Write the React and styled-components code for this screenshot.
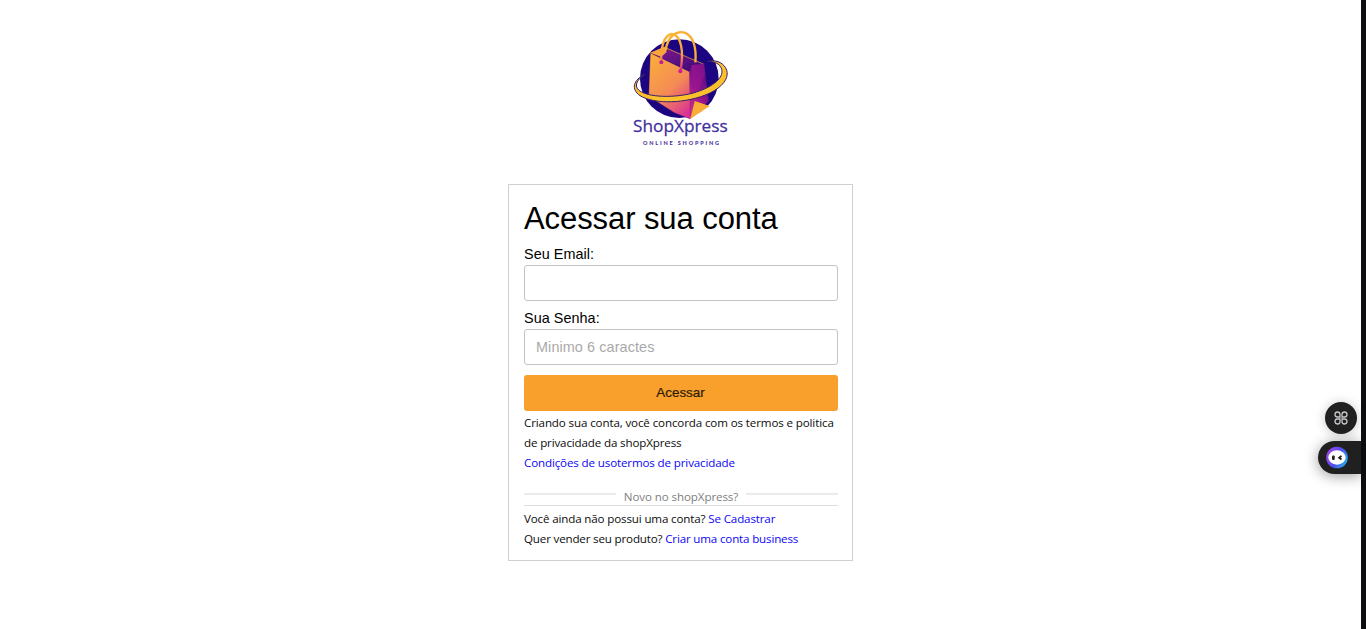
import React from 'react';
import styled, { createGlobalStyle } from 'styled-components';

const GlobalStyle = createGlobalStyle`
  * { box-sizing: border-box; }
  body { margin: 0; background: #fff; overflow: hidden; font-family: "Liberation Sans", Arial, sans-serif; color: #000; }
  h1, p { margin: 0; }
`;

const Page = styled.div`
  display: flex;
  height: 629px;
`;

const Main = styled.main`
  flex: 1;
  display: flex;
  flex-direction: column;
  align-items: center;
  padding-top: 20px;
`;

const EdgeStrip = styled.div`
  width: 5px;
  background: #0c0e0f;
`;

const LogoArt = styled.svg`
  display: block;
  width: 120px;
  height: 135px;
  flex: none;
`;

const Card = styled.section`
  width: 345px;
  height: 377px;
  margin-top: 29px;
  padding: 14px 14px 0 15px;
  border: 1px solid #d0d0d0;
`;

const Title = styled.h1`
  font-size: 31px;
  line-height: 40px;
  font-weight: 400;
  letter-spacing: -0.08px;
  white-space: nowrap;
`;

const Field = styled.label`
  display: block;
  margin-top: ${(p) => p.$gap}px;
  font-size: 14.4px;
  line-height: 18px;
  letter-spacing: 0.05px;
`;

const Input = styled.input`
  display: block;
  width: 314px;
  height: 36px;
  margin-top: 2px;
  padding: 0 11px;
  border: 1px solid #c3c3c3;
  border-radius: 3px;
  background: #fff;
  font: 14.4px "Liberation Sans", Arial, sans-serif;
  letter-spacing: 0.1px;
  outline: none;
  &::placeholder { color: #a9a9a9; opacity: 1; }
`;

const Submit = styled.button`
  display: block;
  width: 314px;
  height: 36px;
  margin-top: 10px;
  padding: 0 1px 2px 0;
  border: 0;
  border-radius: 3px;
  background: #f8a02b;
  color: #2b1c08;
  font: 13.4px "Liberation Sans", Arial, sans-serif;
  -webkit-text-stroke: 0.2px #2b1c08;
`;

const Terms = styled.div`
  padding-top: 2px;
`;

const Small = styled.p`
  height: 20px;
  font-family: "Open Sans", "Segoe UI", sans-serif;
  font-size: 11.6px;
  line-height: 19px;
  color: #0c0c0c;
  white-space: nowrap;
  letter-spacing: ${(p) => p.$track || 0}px;
`;

const Link = styled.a`
  color: #0c06f5;
`;

const Divider = styled.div`
  display: flex;
  align-items: center;
  height: 21px;
  margin-top: 12px;
  padding-top: 2px;
  border-bottom: 1px solid #dedede;
  margin-bottom: 3px;
`;

const Rule = styled.span`
  flex: 1;
  height: 2px;
  margin-top: -4px;
  background: #ebebeb;
`;

const DividerText = styled(Small)`
  padding: 2px 8px 0;
  height: 22px;
  color: #808080;
`;

const Widgets = styled.aside`
  position: fixed;
  right: 5px;
  top: 402px;
  display: flex;
  flex-direction: column;
  align-items: flex-end;
  gap: 7px;
`;

const RoundButton = styled.div`
  width: 32px;
  height: 32px;
  margin-right: 4px;
  border-radius: 50%;
  background: #202021;
  display: grid;
  place-items: center;
  box-shadow: 0 1px 12px rgba(0, 0, 0, 0.22);
`;

const TabButton = styled.div`
  width: 43px;
  height: 33px;
  padding-left: 7px;
  border-radius: 17px 0 0 17px;
  background: #202021;
  display: flex;
  align-items: center;
  box-shadow: 0 2px 14px rgba(0, 0, 0, 0.4);
`;

function Logo() {
  return (
    <LogoArt viewBox="3 0 360 405" role="img" aria-label="ShopXpress">
      <defs>
        <linearGradient id="front" x1="0.2" y1="0" x2="0.8" y2="1">
          <stop offset="0" stopColor="#f9ac3c" />
          <stop offset="0.55" stopColor="#f58a55" />
          <stop offset="1" stopColor="#d93292" />
        </linearGradient>
        <linearGradient id="side" x1="0.8" y1="0" x2="0.2" y2="1">
          <stop offset="0" stopColor="#4b0a84" />
          <stop offset="0.5" stopColor="#8d148d" />
          <stop offset="1" stopColor="#d52d86" />
        </linearGradient>
        <linearGradient id="inner" x1="0" y1="0" x2="1" y2="1">
          <stop offset="0" stopColor="#8c1b91" />
          <stop offset="1" stopColor="#350875" />
        </linearGradient>
        <linearGradient id="strap" x1="0" y1="0" x2="0" y2="1">
          <stop offset="0" stopColor="#fbb52e" />
          <stop offset="0.55" stopColor="#f6a047" />
          <stop offset="1" stopColor="#d02491" />
        </linearGradient>
      </defs>
      <circle cx="178" cy="176" r="118" fill="#1d0480" />
      <path d="M91 99 L134 80 L252 133 L209 153 Z" fill="url(#inner)" />
      <path d="M91 99 L134 80 L140 96 L124 110 Z" fill="#f7a63d" />
      <path d="M91 99 L209 155 L211 297 L163 278 L86 229 Z" fill="url(#front)" stroke="#3b0962" strokeWidth="1" />
      <path d="M91 99 L134 82 L252 133" fill="none" stroke="#f7a63d" strokeWidth="2" />
      <path d="M209 155 L215 135 L252 131 L266 243 L211 297 Z" fill="url(#side)" />
      <path d="M215 135 L252 131 L256 162 L224 240 Z" fill="#a3168f" opacity="0.55" />
      <path d="M211 297 L224 243 L269 258 Z" fill="#f9ad38" />
      <path d="M137 91 C142 50 169 31 194 38 C220 48 230 83 226 127" fill="none" stroke="#f8b034" strokeWidth="7" />
      <path d="M124 130 C121 83 132 45 155 42 C183 44 193 92 181 155" fill="none" stroke="url(#strap)" strokeWidth="7" />
      <circle cx="124" cy="127" r="6" fill="#c81c91" />
      <circle cx="181" cy="154" r="6" fill="#c81c91" />
      <path
        d="M74 163 C40 180 32 207 60 227 C104 254 200 251 268 220 C313 198 332 168 316 142 C305 126 287 119 262 124 C291 124 305 137 306 154 C306 178 275 203 220 219 C163 234 85 233 57 211 C42 199 49 180 74 163 Z"
        fill="#fbc02c"
        stroke="#35206e"
        strokeWidth="3"
      />
      <text x="39" y="336" textLength="284" lengthAdjust="spacingAndGlyphs" fontFamily="Open Sans, sans-serif" fontSize="51" fill="#41309b" stroke="#41309b" strokeWidth="0.8">ShopXpress</text>
      <text x="69" y="374" textLength="228" fontFamily="Lato, sans-serif" fontWeight="900" fontSize="16.5" fill="#44339a">ONLINE SHOPPING</text>
    </LogoArt>
  );
}

function CommandIcon() {
  return (
    <svg width="14" height="14" viewBox="0 0 14 14" fill="none" stroke="#c6c6ca" strokeWidth="1.3">
      <path d="M6 6H3.3A2.5 2.5 0 1 1 6 3.3Z" />
      <path d="M8 6V3.3A2.5 2.5 0 1 1 10.7 6Z" />
      <path d="M6 8V10.7A2.5 2.5 0 1 1 3.3 8Z" />
      <path d="M8 8H10.7A2.5 2.5 0 1 1 8 10.7Z" />
    </svg>
  );
}

function AssistantIcon() {
  return (
    <svg width="24" height="24" viewBox="0 0.5 24 24">
      <defs>
        <linearGradient id="ring" x1="0" y1="0.3" x2="1" y2="0.8">
          <stop offset="0" stopColor="#a345e8" />
          <stop offset="0.5" stopColor="#4e4df0" />
          <stop offset="1" stopColor="#20b8e4" />
        </linearGradient>
      </defs>
      <circle cx="12" cy="12" r="10.8" fill="url(#ring)" />
      <ellipse cx="12" cy="12" rx="8.7" ry="7.2" fill="#fff" />
      <rect x="7" y="10" width="2.7" height="4.4" rx="1" fill="#202021" />
      <path d="M16.5 10.4 L14.1 12.2 L16.5 14" fill="none" stroke="#202021" strokeWidth="1.8" />
    </svg>
  );
}

export default function App() {
  return (
    <Page>
      <GlobalStyle />
      <Main>
        <Logo />
        <Card>
          <Title>Acessar sua conta</Title>
          <Field $gap={6}>
            Seu Email:
            <Input type="email" />
          </Field>
          <Field $gap={8}>
            Sua Senha:
            <Input type="password" placeholder="Minimo 6 caractes" />
          </Field>
          <Submit>Acessar</Submit>
          <Terms>
            <Small $track={-0.13}>Criando sua conta, você concorda com os termos e politica</Small>
            <Small $track={-0.15}>de privacidade da shopXpress</Small>
            <Small $track={-0.14}>
              <Link>Condições de usotermos de privacidade</Link>
            </Small>
          </Terms>
          <Divider>
            <Rule />
            <DividerText $track={-0.11}>Novo no shopXpress?</DividerText>
            <Rule />
          </Divider>
          <Small $track={-0.15}>
            Você ainda não possui uma conta? <Link>Se Cadastrar</Link>
          </Small>
          <Small $track={-0.17}>
            Quer vender seu produto? <Link>Criar uma conta business</Link>
          </Small>
        </Card>
      </Main>
      <EdgeStrip />
      <Widgets>
        <RoundButton>
          <CommandIcon />
        </RoundButton>
        <TabButton>
          <AssistantIcon />
        </TabButton>
      </Widgets>
    </Page>
  );
}
